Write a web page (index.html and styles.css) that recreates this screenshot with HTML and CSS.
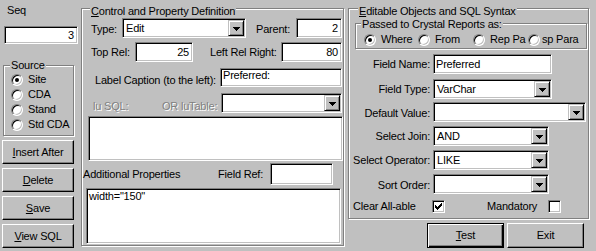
FILE: index.html
```html
<!DOCTYPE html>
<html>
<head>
<meta charset="utf-8">
<link rel="stylesheet" href="styles.css">
</head>
<body>
<div class="dialog">
  <div class="col-left">
    <div class="seq-label">Seq</div>
    <div class="field num seq-input">3</div>
    <div class="group source">
      <div class="legend source-legend">Source</div>
      <div class="radio-list">
        <div class="radio-row"><span class="radio on"></span>Site</div>
        <div class="radio-row"><span class="radio"></span>CDA</div>
        <div class="radio-row"><span class="radio"></span>Stand</div>
        <div class="radio-row"><span class="radio"></span>Std CDA</div>
      </div>
    </div>
    <div class="btn-stack">
      <div class="btn side-btn"><span><u>I</u>nsert After</span></div>
      <div class="btn side-btn"><span><u>D</u>elete</span></div>
      <div class="btn side-btn"><span><u>S</u>ave</span></div>
      <div class="btn side-btn"><span><u>V</u>iew SQL</span></div>
    </div>
  </div>

  <div class="group mid">
    <div class="legend big-legend mid-legend"><u>C</u>ontrol and Property Definition</div>
    <div class="row m-row1">
      <div class="lbl w31 pt5">Type:</div>
      <div class="combo w124"><div class="val">Edit</div><div class="drop"><svg width="7" height="4" viewBox="0 0 7 4"><path d="M0 0h7v1H0zM1 1h5v1H1zM2 2h3v1H2zM3 3h1v1H3z" fill="#000"/></svg></div></div>
      <div class="lbl w40 pt5 ml10">Parent:</div>
      <div class="field num w46">2</div>
    </div>
    <div class="row m-row2">
      <div class="lbl w44 pt4">Top Rel:</div>
      <div class="field num w58">25</div>
      <div class="lbl w71 pt4 ml17">Left Rel Right:</div>
      <div class="field num w61">80</div>
    </div>
    <div class="row m-row3">
      <div class="lbl w125 pt6">Label Caption (to the left):</div>
      <div class="field top w122 h19">Preferred:</div>
    </div>
    <div class="row m-row4">
      <div class="lbl dis w69 pt7">lu SQL:</div>
      <div class="lbl dis w59 pt7">OR luTable:</div>
      <div class="combo w121"><div class="val"></div><div class="drop"><svg width="7" height="4" viewBox="0 0 7 4"><path d="M0 0h7v1H0zM1 1h5v1H1zM2 2h3v1H2zM3 3h1v1H3z" fill="#000"/></svg></div></div>
    </div>
    <div class="field memo memo1"></div>
    <div class="row m-row6">
      <div class="lbl w135 pt5">Additional Properties</div>
      <div class="lbl w52 pt5">Field Ref:</div>
      <div class="field w63 h22"></div>
    </div>
    <div class="field memo memo2">width="150"</div>
  </div>

  <div class="col-right">
    <div class="group right">
      <div class="legend big-legend right-legend"><u>E</u>ditable Objects and SQL Syntax</div>
      <div class="group inner">
        <div class="legend inner-legend">Passed to Crystal Reports as:</div>
        <div class="radio-line">
          <div class="ropt w54"><span class="radio on"></span>Where</div>
          <div class="ropt w55"><span class="radio"></span>From</div>
          <div class="ropt w55"><span class="radio"></span>Rep Pa</div>
          <div class="ropt tight"><span class="radio"></span>sp Para</div>
        </div>
      </div>
      <div class="frow mt5">
        <div class="flbl pt4">Field Name:</div>
        <div class="field w119">Preferred</div>
      </div>
      <div class="frow mt5">
        <div class="flbl pt4">Field Type:</div>
        <div class="combo w119"><div class="val">VarChar</div><div class="drop"><svg width="7" height="4" viewBox="0 0 7 4"><path d="M0 0h7v1H0zM1 1h5v1H1zM2 2h3v1H2zM3 3h1v1H3z" fill="#000"/></svg></div></div>
      </div>
      <div class="frow mt3">
        <div class="flbl pt5">Default Value:</div>
        <div class="combo w153"><div class="val"></div><div class="drop"><svg width="7" height="4" viewBox="0 0 7 4"><path d="M0 0h7v1H0zM1 1h5v1H1zM2 2h3v1H2zM3 3h1v1H3z" fill="#000"/></svg></div></div>
      </div>
      <div class="frow mt4">
        <div class="flbl pt4">Select Join:</div>
        <div class="combo w116"><div class="val">AND</div><div class="drop"><svg width="7" height="4" viewBox="0 0 7 4"><path d="M0 0h7v1H0zM1 1h5v1H1zM2 2h3v1H2zM3 3h1v1H3z" fill="#000"/></svg></div></div>
      </div>
      <div class="frow mt4">
        <div class="flbl pt4">Select Operator:</div>
        <div class="combo w116"><div class="val">LIKE</div><div class="drop"><svg width="7" height="4" viewBox="0 0 7 4"><path d="M0 0h7v1H0zM1 1h5v1H1zM2 2h3v1H2zM3 3h1v1H3z" fill="#000"/></svg></div></div>
      </div>
      <div class="frow mt4">
        <div class="flbl pt5">Sort Order:</div>
        <div class="combo w116"><div class="val"></div><div class="drop"><svg width="7" height="4" viewBox="0 0 7 4"><path d="M0 0h7v1H0zM1 1h5v1H1zM2 2h3v1H2zM3 3h1v1H3z" fill="#000"/></svg></div></div>
      </div>
      <div class="crow">
        <div class="lbl w79 pt2">Clear All-able</div>
        <div class="check"><svg width="7" height="7" viewBox="0 0 7 7"><path d="M6 0h1v3H6zM5 1h1v3H5zM4 2h1v3H4zM0 2h1v3H0zM1 3h1v3H1zM2 4h1v3H2zM3 3h1v3H3z" fill="#000"/></svg></div>
        <div class="lbl w61 pt2 ml42">Mandatory</div>
        <div class="check"></div>
      </div>
    </div>
    <div class="btn-row">
      <div class="btn default test-btn"><span><u>T</u>est</span></div>
      <div class="btn exit-btn"><span>Exit</span></div>
    </div>
  </div>
</div>
</body>
</html>
```

FILE: styles.css
```css
* { box-sizing: border-box; }
html, body { margin: 0; padding: 0; }
body {
  background: #c0c0c0;
  font-family: "Liberation Sans", Arial, sans-serif;
  font-size: 11px;
  line-height: 13px;
  letter-spacing: -0.2px;
  color: #000;
  width: 596px;
  height: 251px;
  overflow: hidden;
}
u { text-decoration: underline; text-underline-offset: 1px; }

.dialog { display: flex; align-items: flex-start; }

/* ---------- generic 3D widgets ---------- */
.group {
  border: 1px solid #808080;
  box-shadow: 1px 1px 0 #fff, inset 1px 1px 0 #fff;
  display: flex;
  flex-direction: column;
  align-items: flex-start;
}
.legend {
  width: fit-content;
  height: 13px;
  padding: 0 1px;
  background: #c0c0c0;
  white-space: nowrap;
}
.field {
  background: #fff;
  height: 20px;
  border: 1px solid;
  border-color: #808080 #fff #fff #808080;
  box-shadow: inset 1px 1px 0 #000, inset -1px -1px 0 #c0c0c0;
  padding: 0 2px;
  display: flex;
  align-items: center;
  white-space: nowrap;
  overflow: hidden;
  flex: none;
}
.field.num { justify-content: flex-end; padding-right: 3px; }
.field.top { align-items: flex-start; padding-top: 0; }
.field.memo { align-items: flex-start; padding-top: 1px; }

.combo {
  background: #fff;
  height: 20px;
  border: 1px solid;
  border-color: #808080 #fff #fff #808080;
  box-shadow: inset 1px 1px 0 #000, inset -1px -1px 0 #c0c0c0;
  padding: 1px;
  display: flex;
  flex: none;
}
.combo .val {
  flex: 1;
  padding-left: 2px;
  display: flex;
  align-items: center;
  white-space: nowrap;
  overflow: hidden;
}
.combo .drop {
  width: 16px;
  flex: none;
  background: #c0c0c0;
  border: 1px solid;
  border-color: #c0c0c0 #000 #000 #c0c0c0;
  box-shadow: inset 1px 1px 0 #fff, inset -1px -1px 0 #808080;
  display: flex;
  align-items: center;
  justify-content: center;
  padding-top: 1px;
}
.combo .drop svg { display: block; }

.btn {
  background: #c0c0c0;
  border: 1px solid;
  border-color: #fff #000 #000 #fff;
  box-shadow: inset -1px -1px 0 #808080;
  display: flex;
  align-items: center;
  justify-content: center;
  white-space: nowrap;
  flex: none;
}
.btn.default {
  border-color: #000;
  box-shadow: inset 1px 1px 0 #fff, inset -1px -1px 0 #000, inset -2px -2px 0 #808080;
}

.radio {
  width: 12px;
  height: 12px;
  flex: none;
  border-radius: 50%;
  background: #fff;
  border: 1px solid;
  border-color: #808080 #fff #fff #808080;
  box-shadow: inset 1px 1px 0 #000, inset -1px -1px 0 #c0c0c0;
}
.radio.on::after {
  content: "";
  display: block;
  width: 4px;
  height: 4px;
  margin: 3px;
  border-radius: 50%;
  background: #000;
}

.check {
  width: 13px;
  height: 13px;
  flex: none;
  margin-top: 2px;
  background: #fff;
  border: 1px solid;
  border-color: #808080 #fff #fff #808080;
  box-shadow: inset 1px 1px 0 #000, inset -1px -1px 0 #c0c0c0;
  display: flex;
  align-items: center;
  justify-content: center;
}
.check svg { display: block; }

.lbl { white-space: nowrap; flex: none; }
.lbl.dis { color: #808080; text-shadow: 1px 1px 0 #fff; }

/* sizes */
.w31 { width: 31px; } .w40 { width: 40px; } .w44 { width: 44px; }
.w46 { width: 46px; } .w52 { width: 52px; } .w54 { width: 54px; }
.w55 { width: 55px; } .w58 { width: 58px; } .w59 { width: 59px; }
.w61 { width: 61px; } .w63 { width: 63px; } .w69 { width: 69px; }
.w71 { width: 71px; } .w79 { width: 79px; } .w116 { width: 116px; }
.w119 { width: 119px; } .w121 { width: 121px; } .w122 { width: 122px; }
.w124 { width: 124px; } .w125 { width: 125px; } .w135 { width: 135px; }
.w153 { width: 153px; }
.h19 { height: 19px; } .h22 { height: 22px; }
.pt2 { padding-top: 2px; } .pt4 { padding-top: 4px; } .pt5 { padding-top: 5px; }
.pt6 { padding-top: 6px; } .pt7 { padding-top: 7px; }
.ml10 { margin-left: 10px; } .ml17 { margin-left: 17px; } .ml42 { margin-left: 42px; }
.mt3 { margin-top: 3px; } .mt4 { margin-top: 4px; } .mt5 { margin-top: 5px; }

/* ---------- left column ---------- */
.col-left {
  width: 78px;
  flex: none;
  display: flex;
  flex-direction: column;
  align-items: flex-start;
}
.seq-label { margin: 4px 0 0 7px; height: 13px; }
.seq-input { margin: 9px 0 0 4px; width: 74px; height: 18px; }
.source { margin: 21px 0 0 3px; width: 71px; height: 71px; }
.source-legend { margin: -7px 0 0 6px; }
.radio-list { margin-left: 7px; display: flex; flex-direction: column; }
.radio-row { height: 15px; display: flex; align-items: center; gap: 5px; white-space: nowrap; }
.btn-stack { margin: 4px 0 0 2px; display: flex; flex-direction: column; gap: 4px; }
.side-btn { width: 72px; height: 24px; }

/* ---------- middle group ---------- */
.mid { margin: 8px 0 0 3px; width: 263px; height: 238px; flex: none; }
.mid-legend { margin: -4px 0 0 8px; }
.row { display: flex; align-items: flex-start; }
.m-row1 { margin-left: 9px; }
.m-row2 { margin: 4px 0 0 9px; }
.m-row3 { margin: 6px 0 0 13px; }
.m-row4 { margin: 6px 0 0 11px; }
.memo1 { margin: 3px 0 0 6px; width: 255px; height: 45px; }
.m-row6 { margin: 2px 0 0 1px; }
.memo2 { margin: 3px 0 0 4px; width: 255px; height: 56px; }

/* ---------- right group ---------- */
.col-right { margin-left: 4px; display: flex; flex-direction: column; align-items: flex-start; }
.right { margin-top: 8px; width: 241px; height: 211px; }
.right-legend { margin: -4px 0 0 9px; }
.inner { margin: 5px 0 0 6px; width: 232px; height: 26px; }
.inner-legend { margin: -6px 0 0 5px; }
.radio-line { margin: 1px 0 0 8px; display: flex; height: 15px; }
.ropt { display: flex; align-items: center; gap: 5px; white-space: nowrap; flex: none; overflow: hidden; }
.ropt.tight { gap: 2px; }
.frow { display: flex; align-items: flex-start; }
.flbl { width: 81px; margin-right: 3px; text-align: right; white-space: nowrap; flex: none; }
.crow { display: flex; align-items: flex-start; margin: 4px 0 0 4px; }

.btn-row { display: flex; margin: 4px 0 0 79px; gap: 3px; }
.test-btn, .exit-btn { width: 77px; height: 25px; }
```
